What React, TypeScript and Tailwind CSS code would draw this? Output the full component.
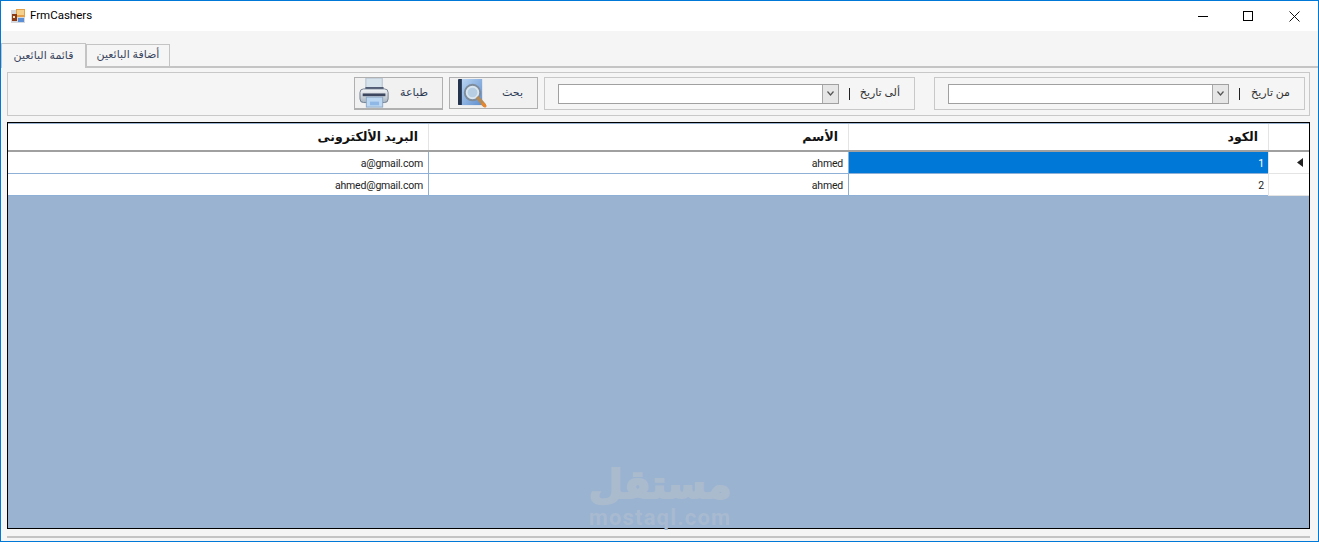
const FONT = "font-['Roboto','DejaVu_Sans',sans-serif]";

// Small WinForms-style glyphs, drawn by hand because the icon packs have no match.
function AppIcon() {
  return (
    <svg width="16" height="16" viewBox="0 0 16 16" className="shrink-0">
      <rect x="1" y="2" width="14" height="13" fill="#d5d8dc" />
      <rect x="6" y="1" width="9" height="8" fill="#e5a04a" />
      <rect x="7" y="2" width="7" height="5" fill="#f5cf8c" />
      <rect x="2" y="6" width="5" height="7" fill="#8b3a17" />
      <rect x="3" y="8" width="2" height="2" fill="#f2e3c0" />
      <rect x="8" y="10" width="6" height="4" fill="#5c8fd6" />
    </svg>
  );
}

function PrinterIcon() {
  return (
    <svg width="31" height="30" viewBox="0 0 34 33" className="shrink-0">
      <defs>
        <linearGradient id="bodyG" x1="0" y1="0" x2="0" y2="1">
          <stop offset="0" stopColor="#f4f6f8" />
          <stop offset="1" stopColor="#a9b4c0" />
        </linearGradient>
      </defs>
      <rect x="7.5" y="0" width="18" height="12" fill="#d6e2ec" stroke="#aebdca" />
      <rect x="7" y="10" width="20" height="5" fill="#45506a" />
      <rect x="1" y="12" width="31" height="15" rx="4" fill="url(#bodyG)" stroke="#6d7b8c" />
      <rect x="4" y="17" width="25" height="3" fill="#3d4860" />
      <rect x="8" y="21" width="18" height="11" fill="#bcd7f2" stroke="#8aa6c4" />
      <rect x="12" y="26" width="10" height="4" fill="#8fb8e6" />
    </svg>
  );
}

function SearchBookIcon() {
  return (
    <svg width="29" height="29" viewBox="0 0 30 30" className="shrink-0">
      <defs>
        <linearGradient id="bookG" x1="0" y1="0" x2="1" y2="1">
          <stop offset="0" stopColor="#b8d4f2" />
          <stop offset="1" stopColor="#5f8fcf" />
        </linearGradient>
      </defs>
      <rect x="0" y="0" width="24" height="27" rx="1" fill="#24344f" />
      <rect x="4" y="0" width="21" height="27" fill="url(#bookG)" />
      <circle cx="15" cy="14" r="8" fill="#d9e6f0" stroke="#7e8b9a" strokeWidth="2" />
      <circle cx="15" cy="14" r="5" fill="#b6cde2" />
      <path d="M21 20 L27 27" stroke="#b58a55" strokeWidth="4" strokeLinecap="round" />
      <path d="M26 26 L28 28" stroke="#e8862e" strokeWidth="3" strokeLinecap="round" />
    </svg>
  );
}

function DateField({ label, gap }: { label: string; gap: string }) {
  return (
    <div className={`flex h-[33px] w-[371px] items-center border border-[#c8c8c8] ${gap}`} dir="rtl">
      <span className="mr-[14px] w-[39px] text-[11px] whitespace-nowrap text-[#333]">{label}</span>
      <span className="mr-[11px] h-[12px] w-[1px] bg-[#222]" />
      <div className="mr-[10px] flex h-[20px] w-[281px] border border-[#a0a0a0] bg-white" dir="ltr">
        <div className="flex-1" />
        <div className="flex w-[16px] items-center justify-center border-l border-[#a8a8a8] bg-[#e6e6e6]">
          <svg width="7" height="5" viewBox="0 0 7 5">
            <path d="M0.5 0.5 L3.5 4 L6.5 0.5" fill="none" stroke="#555" strokeWidth="1.2" />
          </svg>
        </div>
      </div>
    </div>
  );
}

function ToolButton({ label, icon, extra, iconBox }: { label: string; icon: React.ReactNode; extra: string; iconBox: string }) {
  return (
    <button className={`flex w-[89px] items-center justify-between border border-[#b0b0b0] bg-[#f1f1f1] ${extra}`}>
      <span className={`flex h-[30px] items-center justify-end ${iconBox}`}>{icon}</span>
      <span className="mr-[14px] text-[11px] text-[#2b3a55]" dir="rtl">{label}</span>
    </button>
  );
}

const rows = [
  { code: "1", name: "ahmed", email: "a@gmail.com", active: true },
  { code: "2", name: "ahmed", email: "ahmed@gmail.com", active: false },
];

export default function App() {
  return (
    <div className={`flex h-[542px] w-[1319px] flex-col overflow-hidden border border-[#0078d7] bg-[#f5f5f5] ${FONT}`}>
      <header className="flex h-[30px] shrink-0 items-center bg-white pl-[9px]">
        <AppIcon />
        <span className="ml-[4px] text-[11.5px] text-black">FrmCashers</span>
        <div className="ml-auto flex h-full items-center">
          <span className="mr-[35px] h-[1px] w-[10px] bg-black" />
          <span className="mr-[36px] h-[10px] w-[10px] border border-black" />
          <svg width="11" height="11" viewBox="0 0 11 11" className="mr-[18px]">
            <path d="M0.5 0.5 L10.5 10.5 M10.5 0.5 L0.5 10.5" stroke="#111" strokeWidth="1" />
          </svg>
        </div>
      </header>

      <nav className="flex h-[37px] shrink-0 items-end border-b-2 border-[#c4c4c4]" dir="ltr">
        <div className="z-10 -mb-[2px] flex h-[25px] w-[85px] items-center justify-center border border-b-0 border-[#c4c4c4] bg-[#f5f5f5] text-[11px] text-[#3a4660]" dir="rtl">
          قائمة البائعين
        </div>
        <div className="flex h-[22px] w-[84px] items-center justify-center border border-b-0 border-[#c4c4c4] bg-[#f5f5f5] text-[11px] text-[#3a4660]" dir="rtl">
          أضافة البائعين
        </div>
      </nav>

      <main className="relative flex min-h-0 flex-1 flex-col pt-[4px] pr-[8px] pl-[6px]">
        <section className="flex h-[44px] shrink-0 items-start justify-end border border-[#c8c8c8] pt-[4px] pr-[4px]">
          <ToolButton label="طباعة" extra="mr-[6px] h-[33px] border-b-2" iconBox="w-[35px]" icon={<PrinterIcon />} />
          <ToolButton label="بحث" extra="mr-[6px] h-[32px]" iconBox="w-[37px]" icon={<SearchBookIcon />} />
          <DateField label="ألى تاريخ" gap="mr-[19px]" />
          <DateField label="من تاريخ" gap="" />
        </section>

        <section className="mt-[6px] flex h-[407px] shrink-0 flex-col border border-black bg-[#9ab3d1]" dir="rtl">
          <div className="mt-[1px] grid h-[28px] shrink-0 grid-cols-[41px_420px_420px_1fr] border-b-2 border-[#a0a0a0] bg-white text-[12.5px] font-bold text-[#111]">
            <div className="border-l border-[#e4e4e4]" />
            <div className="flex items-center border-l border-[#e4e4e4] pr-[10px]">الكود</div>
            <div className="flex items-center border-l border-[#e4e4e4] pr-[10px]">الأسم</div>
            <div className="flex items-center pr-[10px]">البريد الألكترونى</div>
          </div>
          {rows.map((row) => (
            <div key={row.code} className="grid h-[22px] shrink-0 grid-cols-[41px_420px_420px_1fr] text-[10.5px] tracking-[-0.2px] text-[#222]">
              <div className="flex items-center border-b border-l border-[#e4e4e4] bg-white pr-[6px]">
                {row.active && (
                  <svg width="6" height="9" viewBox="0 0 6 9">
                    <path d="M6 0 L0 4.5 L6 9 Z" fill="#222" />
                  </svg>
                )}
              </div>
              <div className={`flex items-center justify-start border-b border-l border-[#8fb0d6] pt-[2px] pr-[4px] ${row.active ? "bg-[#0078d7] text-white" : "bg-white"}`}>{row.code}</div>
              <div className="flex items-center justify-start border-b border-l border-[#8fb0d6] bg-white pt-[2px] pr-[5px]"><span dir="ltr">{row.name}</span></div>
              <div className="flex items-center justify-start border-b border-[#8fb0d6] bg-white pt-[2px] pr-[5px]"><span dir="ltr">{row.email}</span></div>
            </div>
          ))}
        </section>

        <div className="mt-[7px] h-[2px] shrink-0 bg-[#c4c4c4]" />

        {/* site watermark sits over the grid */}
        <div className="pointer-events-none absolute top-[395px] left-[586px] flex w-[146px] flex-col items-center text-[#abbbce]">
          <span className="font-['DejaVu_Sans',sans-serif] text-[39px] leading-[44px] font-bold [-webkit-text-stroke:2px_#abbbce]" dir="rtl">مستقل</span>
          <span className="h-[20px] text-[22px] leading-[22px] font-bold tracking-[1.2px] whitespace-nowrap text-[#a8bad0]">mostaql.com</span>
        </div>
      </main>
    </div>
  );
}
